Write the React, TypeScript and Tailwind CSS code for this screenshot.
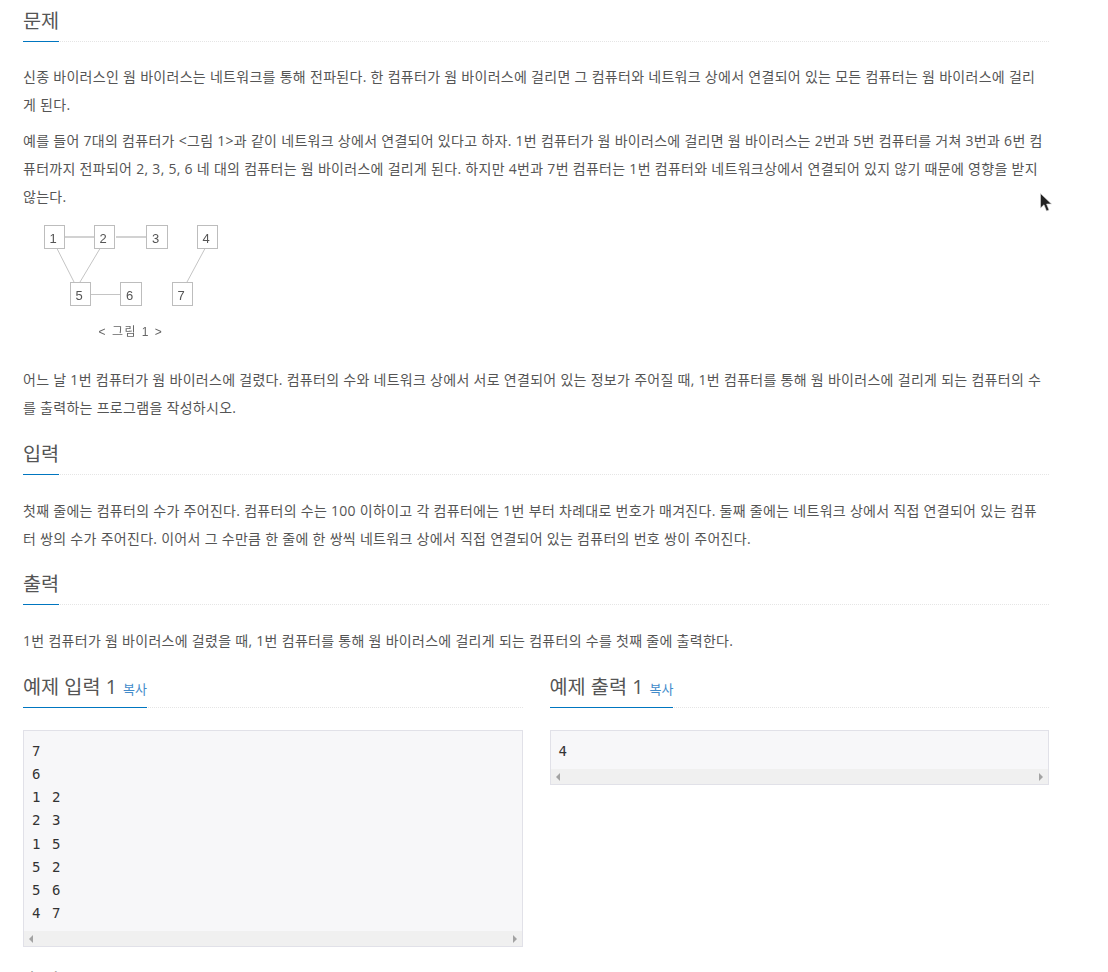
const FONT = "font-['Open_Sans','Noto_Sans_CJK_KR',sans-serif]";

function Heading({ children }: { children: React.ReactNode }) {
  return (
    <div className="flex border-b border-dotted border-[#e5e5e5] h-[31px]">
      <h3 className="h-[31px] border-b border-[#0076c0] text-[19.7px] leading-[20px] font-normal text-[#555]">
        {children}
      </h3>
    </div>
  );
}

function CopyLink() {
  return <a className="ml-[6px] text-[13px] text-[#428bca]">복사</a>;
}

function ScrollBar() {
  return (
    <div className="h-[15px] bg-[#f0f0f0] flex items-center justify-between px-[5px] shrink-0">
      <span className="w-0 h-0 border-y-[4px] border-y-transparent border-r-[4px] border-r-[#a3a3a3]" />
      <span className="w-0 h-0 border-y-[4px] border-y-transparent border-l-[4px] border-l-[#a3a3a3]" />
    </div>
  );
}

function Sample({ text }: { text: string }) {
  return (
    <div className="mt-[22px] border border-[#e1e1e8] bg-[#f7f7f9]">
      <pre className="px-[8px] pt-[9px] pb-[6px] text-[14px] leading-[23.14px] tracking-[1.6px] text-[#333] font-['DejaVu_Sans_Mono','Noto_Sans_CJK_KR',monospace]">
        {text}
      </pre>
      <ScrollBar />
    </div>
  );
}

function Figure() {
  const boxes = [
    { x: 21.5, y: 11.5, w: 20, n: "1" },
    { x: 71.5, y: 11.5, w: 20, n: "2" },
    { x: 123.5, y: 11.5, w: 21, n: "3" },
    { x: 174.5, y: 11.5, w: 20, n: "4" },
    { x: 47.5, y: 68.5, w: 20, n: "5" },
    { x: 97.5, y: 68.5, w: 21, n: "6" },
    { x: 149.5, y: 68.5, w: 20, n: "7" },
  ];
  return (
    <svg width="220" height="135" viewBox="0 0 220 135" className="block blur-[0.3px]">
      <g stroke="#c4c4c4" strokeWidth="1" fill="none">
        <path d="M42 23H71M93 23H123" strokeWidth="1.5" />
        <path d="M34 34.5L51 68M57 68L77 34.5M68 80.5H97M182 34.5L164 68" />
      </g>
      {boxes.map((b) => (
        <g key={b.n}>
          <rect x={b.x} y={b.y} width={b.w} height="23" fill="#fff" stroke="#bdbdbd" />
          <text
            x={b.x + b.w / 2 - 1.5}
            y={b.y + 17.5}
            textAnchor="middle"
            fontSize="13"
            fill="#555"
            fontFamily="Liberation Sans, sans-serif"
          >
            {b.n}
          </text>
        </g>
      ))}
      <text
        x="108"
        y="122"
        textAnchor="middle"
        fontSize="12"
        letterSpacing="1.5"
        fill="#666"
        fontFamily="Liberation Sans, Noto Sans CJK KR, sans-serif"
      >
        {"< 그림 1 >"}
      </text>
    </svg>
  );
}

function Cursor() {
  return (
    <svg
      width="13"
      height="20"
      viewBox="0 0 13 20"
      className="absolute left-[1040px] top-[193px]"
    >
      <path d="M0.5 0.5V15L4 11.8L6.5 18L9 17L6.6 11H11.5Z" fill="#222" stroke="#ddd" strokeWidth="0.6" />
    </svg>
  );
}

const BODY = "pr-[2px] tracking-[0.29px] text-[#555]";

export default function App() {
  return (
    <div className={`relative h-[972px] w-[1108px] overflow-hidden bg-white pl-[23px] pr-[59px] ${FONT} text-[14px] leading-[28px] text-[#555]`}>
      <Cursor />
      <section className="pt-[11px]">
        <Heading>문제</Heading>
        <p className={`mt-[21px] ${BODY}`}>
          신종 바이러스인 웜 바이러스는 네트워크를 통해 전파된다. 한 컴퓨터가 웜 바이러스에 걸리면 그 컴퓨터와 네트워크 상에서 연결되어 있는 모든 컴퓨터는 웜 바이러스에 걸리게 된다.
        </p>
        <p className={`mt-[8px] ${BODY}`}>
          예를 들어 7대의 컴퓨터가 &lt;그림 1&gt;과 같이 네트워크 상에서 연결되어 있다고 하자. 1번 컴퓨터가 웜 바이러스에 걸리면 웜 바이러스는 2번과 5번 컴퓨터를 거쳐 3번과 6번 컴퓨터까지 전파되어 2, 3, 5, 6 네 대의 컴퓨터는 웜 바이러스에 걸리게 된다. 하지만 4번과 7번 컴퓨터는 1번 컴퓨터와 네트워크상에서 연결되어 있지 않기 때문에 영향을 받지 않는다.
        </p>
        <div className="mt-[3px]">
          <Figure />
        </div>
        <p className={`mt-[17px] ${BODY}`}>
          어느 날 1번 컴퓨터가 웜 바이러스에 걸렸다. 컴퓨터의 수와 네트워크 상에서 서로 연결되어 있는 정보가 주어질 때, 1번 컴퓨터를 통해 웜 바이러스에 걸리게 되는 컴퓨터의 수를 출력하는 프로그램을 작성하시오.
        </p>
      </section>
      <section className="mt-[22px]">
        <Heading>입력</Heading>
        <p className={`mt-[22px] ${BODY}`}>
          첫째 줄에는 컴퓨터의 수가 주어진다. 컴퓨터의 수는 100 이하이고 각 컴퓨터에는 1번 부터 차례대로 번호가 매겨진다. 둘째 줄에는 네트워크 상에서 직접 연결되어 있는 컴퓨터 쌍의 수가 주어진다. 이어서 그 수만큼 한 줄에 한 쌍씩 네트워크 상에서 직접 연결되어 있는 컴퓨터의 번호 쌍이 주어진다.
        </p>
      </section>
      <section className="mt-[21px]">
        <Heading>출력</Heading>
        <p className={`mt-[22px] ${BODY}`}>
          1번 컴퓨터가 웜 바이러스에 걸렸을 때, 1번 컴퓨터를 통해 웜 바이러스에 걸리게 되는 컴퓨터의 수를 첫째 줄에 출력한다.
        </p>
      </section>
      <div className="mt-[22px] grid grid-cols-2 gap-x-[27px]">
        <section>
          <Heading>
            예제 입력 1<CopyLink />
          </Heading>
          <Sample text={"7\n6\n1 2\n2 3\n1 5\n5 2\n5 6\n4 7"} />
        </section>
        <section>
          <Heading>
            예제 출력 1<CopyLink />
          </Heading>
          <Sample text={"4"} />
        </section>
      </div>
      <section className="mt-[24px]">
        <Heading>출처</Heading>
      </section>
    </div>
  );
}
